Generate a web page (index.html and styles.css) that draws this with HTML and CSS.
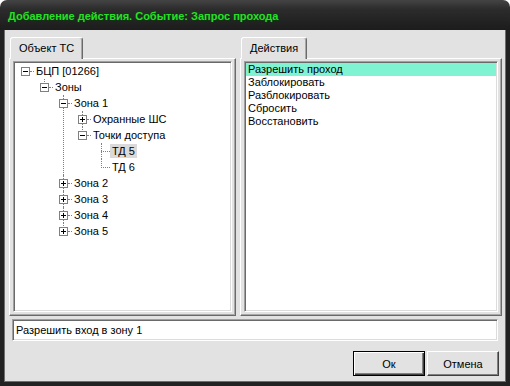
FILE: index.html
```html
<!DOCTYPE html>
<html lang="ru">
<head>
  <meta charset="UTF-8" />
  <title>Добавление действия</title>
  <link rel="stylesheet" href="styles.css">
</head>
<body>

  <div class="window">
    <div class="titlebar">Добавление действия. Событие: Запрос прохода</div>

    <div class="frame">
      <div class="panels">

        <div class="panel left">
          <div class="tabs"><div class="tab">Объект ТС</div></div>
          <div class="page">
            <div class="sunken tree-box">
              <ul class="tree">
                <li>
                  <div class="row"><i class="box"></i><i class="line"></i><span class="label">БЦП [01266]</span></div>
                  <ul>
                    <li>
                      <div class="row"><i class="box"></i><i class="line"></i><span class="label">Зоны</span></div>
                      <ul>
                        <li>
                          <div class="row"><i class="box"></i><i class="line"></i><span class="label">Зона 1</span></div>
                          <ul>
                            <li>
                              <div class="row"><i class="box plus"></i><i class="line"></i><span class="label">Охранные ШС</span></div>
                            </li>
                            <li>
                              <div class="row"><i class="box"></i><i class="line"></i><span class="label">Точки доступа</span></div>
                              <ul>
                                <li><div class="row"><i class="stub"></i><span class="label selected">ТД 5</span></div></li>
                                <li><div class="row"><i class="stub"></i><span class="label">ТД 6</span></div></li>
                              </ul>
                            </li>
                          </ul>
                        </li>
                        <li><div class="row"><i class="box plus"></i><i class="line"></i><span class="label">Зона 2</span></div></li>
                        <li><div class="row"><i class="box plus"></i><i class="line"></i><span class="label">Зона 3</span></div></li>
                        <li><div class="row"><i class="box plus"></i><i class="line"></i><span class="label">Зона 4</span></div></li>
                        <li><div class="row"><i class="box plus"></i><i class="line"></i><span class="label">Зона 5</span></div></li>
                      </ul>
                    </li>
                  </ul>
                </li>
              </ul>
            </div>
          </div>
        </div>

        <div class="panel right">
          <div class="tabs"><div class="tab">Действия</div></div>
          <div class="page">
            <ul class="sunken list">
              <li class="active">Разрешить проход</li>
              <li>Заблокировать</li>
              <li>Разблокировать</li>
              <li>Сбросить</li>
              <li>Восстановить</li>
            </ul>
          </div>
        </div>

      </div>

      <div class="sunken field">Разрешить вход в зону 1</div>

      <div class="buttons">
        <button class="btn default">Ок</button>
        <button class="btn">Отмена</button>
      </div>
    </div>
  </div>

</body>
</html>
```

FILE: styles.css
```css
* {
  box-sizing: border-box;
}

body {
  margin: 0;
  background: #fff;
  font-family: "Liberation Sans", Arial, sans-serif;
  font-size: 11px;
  color: #000;
}

.window {
  width: 510px;
  height: 386px;
  display: flex;
  flex-direction: column;
}

.titlebar {
  height: 30px;
  padding: 2px 0 0 8px;
  line-height: 28px;
  border-radius: 7px 7px 0 0;
  background: linear-gradient(#444 0%, #2c2c2c 30%, #1c1c1c 100%);
  color: #27e027;
  font-weight: bold;
  font-size: 11px;
  text-shadow: 1px 1px 0 #0a3a0a;
}

.frame {
  flex: 1;
  display: flex;
  flex-direction: column;
  padding: 7px 4px 6px 5px;
  background: #e2e2e2;
  border: 4px solid #222;
  border-top: 0;
  box-shadow: inset 1px 0 0 #6e6e6e, inset -1px 0 0 #6e6e6e, inset 0 -1px 0 #6e6e6e;
}

.panels {
  display: flex;
  gap: 4px;
  height: 279px;
}

.panel {
  display: flex;
  flex-direction: column;
}

.panel.left {
  width: 227px;
}

.panel.right {
  flex: 1;
}

.tabs {
  height: 21px;
  display: flex;
}

.tab {
  position: relative;
  z-index: 1;
  height: 22px;
  margin-left: 1px;
  padding: 0 8px;
  line-height: 20px;
  background: #e2e2e2;
  border: 1px solid;
  border-color: #fff #6a6a6a transparent #fff;
  border-bottom: 0;
  border-radius: 3px 3px 0 0;
  box-shadow: inset -1px 0 0 #a8a8a8;
}

.page {
  flex: 1;
  display: flex;
  padding: 2px 3px 3px 3px;
  border: 1px solid;
  border-color: #fff #6a6a6a #6a6a6a #fff;
  box-shadow: inset -1px -1px 0 #a8a8a8;
}

.sunken {
  background: #fff;
  border: 1px solid;
  border-color: #a0a0a0 #fff #fff #a0a0a0;
  box-shadow: inset 1px 1px 0 #6a6a6a, inset -1px -1px 0 #dcdcdc;
}

/* tree */

.tree-box {
  flex: 1;
  padding: 1px;
}

.tree,
.tree ul {
  list-style: none;
  margin: 0;
}

.tree {
  padding: 0 0 0 6px;
}

.tree ul {
  padding: 0 0 0 19px;
}

.tree li {
  position: relative;
}

.tree ul > li::before {
  content: "";
  position: absolute;
  left: 4px;
  top: 0;
  bottom: 0;
  border-left: 1px dotted #808080;
}

.tree ul > li:last-child::before {
  bottom: auto;
  height: 9px;
}

.row {
  display: flex;
  align-items: flex-start;
  height: 16px;
}

.box {
  position: relative;
  width: 9px;
  height: 9px;
  margin-top: 4px;
  border: 1px solid #808080;
  background: #fff;
}

.box::before {
  content: "";
  position: absolute;
  left: 1px;
  top: 3px;
  width: 5px;
  height: 1px;
  background: #000;
}

.box.plus::after {
  content: "";
  position: absolute;
  left: 3px;
  top: 1px;
  width: 1px;
  height: 5px;
  background: #000;
}

.line {
  width: 4px;
  margin-top: 8px;
  border-top: 1px dotted #808080;
}

.stub {
  width: 9px;
  margin: 8px 0 0 4px;
  border-top: 1px dotted #808080;
}

.label {
  margin-top: 1px;
  padding: 0 2px;
  line-height: 14px;
  white-space: nowrap;
}

.label.selected {
  background: #dadada;
}

/* actions list */

.list {
  flex: 1;
  list-style: none;
  margin: 0;
  padding: 1px;
}

.list li {
  padding-left: 2px;
  line-height: 13px;
}

.list li.active {
  background: #80f4d2;
}

/* bottom */

.field {
  height: 22px;
  margin: 3px 4px 0 3px;
  padding-left: 3px;
  line-height: 20px;
}

.buttons {
  display: flex;
  justify-content: flex-end;
  gap: 2px;
  margin: 10px 3px 0 0;
}

.btn {
  width: 72px;
  height: 25px;
  padding: 0;
  font-family: inherit;
  font-size: 11px;
  color: #000;
  background: #e2e2e2;
  border: 1px solid;
  border-color: #fff #404040 #404040 #fff;
  box-shadow: inset -1px -1px 0 #808080;
}

.btn.default {
  border-color: #000;
  box-shadow: inset 1px 1px 0 #fff, inset -1px -1px 0 #404040, inset -2px -2px 0 #808080;
}
```
